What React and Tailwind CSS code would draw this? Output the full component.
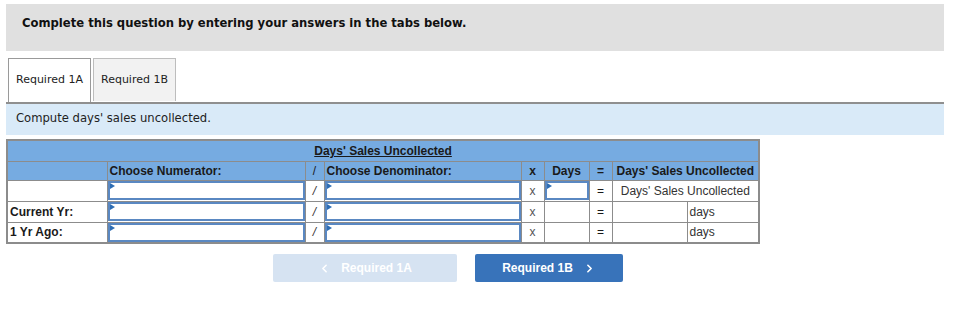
import { ChevronLeft, ChevronRight } from "lucide-react";

const Flag = () => (
  <span className="absolute left-0 top-0 w-0 h-0 border-t-[3px] border-b-[3px] border-l-[5px] border-t-transparent border-b-transparent border-l-[#2e6db4]" />
);

const InputCell = () => (
  <td className="p-0 border border-[#8c8c8c]">
    <div className="relative h-full min-h-[19px] border-2 border-[#5a88c2] bg-white">
      <Flag />
    </div>
  </td>
);

const rows = [
  { label: "", first: true },
  { label: "Current Yr:" },
  { label: "1 Yr Ago:" },
];

const App = () => {
  return (
    <div className="w-[957px] min-h-[318px] bg-white pt-[4px] pl-[6px]" style={{ fontFamily: "'DejaVu Sans', Verdana, sans-serif" }}>
      {/* instructions */}
      <div className="w-[938px] h-[47px] bg-[#e0e0e0] pl-[16px] pt-[11px] text-[11.6px] font-bold text-[#111]">
        Complete this question by entering your answers in the tabs below.
      </div>

      {/* tabs */}
      <div className="flex gap-[2px] mt-[7px] pl-[2px]">
        <div className="w-[83px] h-[44px] border border-b-0 border-[#9a9a9a] bg-white flex items-center justify-center text-[11px] text-[#222]">
          Required 1A
        </div>
        <div className="w-[83px] h-[43px] border border-b-0 border-[#bdbdbd] bg-[#f2f2f2] flex items-center justify-center text-[11px] text-[#222]">
          Required 1B
        </div>
      </div>
      <div className="w-[938px] h-[33px] border-t-2 border-[#8f8f8f] bg-[#d9eaf8] pl-[10px] pt-[6px] text-[11.6px] text-[#222]">
        Compute days' sales uncollected.
      </div>

      {/* table */}
      <table
        className="mt-[4px] w-[752px] border-collapse border-2 border-[#8c8c8c] text-[12px] text-[#1a1a1a] table-fixed"
        style={{ fontFamily: "'Liberation Sans', Arial, sans-serif" }}
      >
        <colgroup>
          <col className="w-[100px]" />
          <col className="w-[198px]" />
          <col className="w-[19px]" />
          <col className="w-[197px]" />
          <col className="w-[23px]" />
          <col className="w-[45px]" />
          <col className="w-[23px]" />
          <col className="w-[75px]" />
          <col className="w-[72px]" />
        </colgroup>
        <thead>
          <tr className="h-[21px] bg-[#76abe1]">
            <th colSpan={9} className="border border-[#8c8c8c] font-bold text-center underline">
              Days' Sales Uncollected
            </th>
          </tr>
          <tr className="h-[19px] bg-[#76abe1] font-bold">
            <th className="border border-[#8c8c8c]" />
            <th className="border border-[#8c8c8c] text-left pl-[2px]">Choose Numerator:</th>
            <th className="border border-[#8c8c8c] font-normal">/</th>
            <th className="border border-[#8c8c8c] text-left pl-[2px]">Choose Denominator:</th>
            <th className="border border-[#8c8c8c]">x</th>
            <th className="border border-[#8c8c8c]">Days</th>
            <th className="border border-[#8c8c8c]">=</th>
            <th colSpan={2} className="border border-[#8c8c8c]">Days' Sales Uncollected</th>
          </tr>
        </thead>
        <tbody>
          {rows.map((r, i) => (
            <tr key={i} className="h-[21px]">
              <td className="border border-[#8c8c8c] pl-[2px] font-bold">{r.label}</td>
              <InputCell />
              <td className="border border-[#8c8c8c] text-center italic text-[#333]">/</td>
              <InputCell />
              <td className="border border-[#8c8c8c] text-center text-[#555]">x</td>
              {r.first ? (
                <InputCell />
              ) : (
                <td className="border border-[#8c8c8c]" />
              )}
              <td className="border border-[#8c8c8c] text-center">=</td>
              {r.first ? (
                <td colSpan={2} className="border border-[#8c8c8c] text-center text-[#333]">
                  Days' Sales Uncollected
                </td>
              ) : (
                <>
                  <td className="border border-[#8c8c8c]" />
                  <td className="border border-[#8c8c8c] pl-[2px] text-[#333]">days</td>
                </>
              )}
            </tr>
          ))}
        </tbody>
      </table>

      {/* navigation */}
      <div className="flex gap-[18px] mt-[10px] ml-[267px]" style={{ fontFamily: "'Liberation Sans', Arial, sans-serif" }}>
        <button className="w-[184px] h-[28px] rounded-[2px] bg-[#d6e3f2] text-white text-[12px] font-bold flex items-center justify-center gap-[10px]">
          <ChevronLeft size={13} strokeWidth={3} />
          Required 1A
        </button>
        <button className="w-[148px] h-[28px] rounded-[2px] bg-[#3873ba] text-white text-[12px] font-bold flex items-center justify-center gap-[10px]">
          Required 1B
          <ChevronRight size={13} strokeWidth={3} />
        </button>
      </div>
    </div>
  );
};

export default App;
